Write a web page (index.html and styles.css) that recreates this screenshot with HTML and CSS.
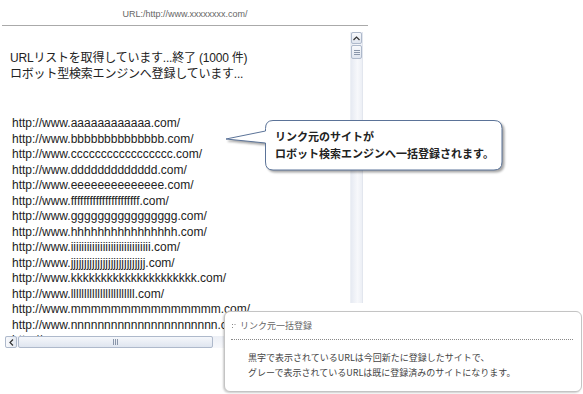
FILE: index.html
```html
<!DOCTYPE html>
<html lang="ja">
<head>
<meta charset="utf-8">
<title>URL一括登録</title>
<link rel="stylesheet" href="styles.css">
</head>
<body>
<div class="page">
    <div class="frame">
        <div class="title">URL:/http://www.xxxxxxxx.com/</div>
        <div class="pane">
            <div class="view">
                <p class="status">URLリストを取得しています...終了 (1000 件)<br>ロボット型検索エンジンへ登録しています...</p>
                <ul class="urls">
                    <li>http://www.aaaaaaaaaaaa.com/</li>
                    <li>http://www.bbbbbbbbbbbbbb.com/</li>
                    <li>http://www.ccccccccccccccccc.com/</li>
                    <li>http://www.ddddddddddddd.com/</li>
                    <li>http://www.eeeeeeeeeeeeee.com/</li>
                    <li>http://www.ffffffffffffffffffffff.com/</li>
                    <li>http://www.gggggggggggggggg.com/</li>
                    <li>http://www.hhhhhhhhhhhhhhhh.com/</li>
                    <li>http://www.iiiiiiiiiiiiiiiiiiiiiiiiiiiiii.com/</li>
                    <li>http://www.jjjjjjjjjjjjjjjjjjjjjjjjjjjj.com/</li>
                    <li>http://www.kkkkkkkkkkkkkkkkkkkkk.com/</li>
                    <li>http://www.llllllllllllllllllllllll.com/</li>
                    <li>http://www.mmmmmmmmmmmmmmm.com/</li>
                    <li>http://www.nnnnnnnnnnnnnnnnnnnnnn.com/</li>
                    <li>http://www.oooooooooooooooooooooo.com/</li>
                </ul>
            </div>
            <div class="vscroll">
                <span class="sbtn">
                    <svg width="7" height="5" viewBox="0 0 7 5"><path d="M0.5 4 L3.5 1 L6.5 4" fill="none" stroke="#333" stroke-width="1.2"/></svg>
                </span>
                <span class="vthumb">
                    <svg width="6" height="5" viewBox="0 0 6 5"><path d="M0 0.5H6M0 2.5H6M0 4.5H6" stroke="#8a96aa" stroke-width="1"/></svg>
                </span>
            </div>
        </div>
        <div class="hscroll">
            <span class="sbtn">
                <svg width="5" height="7" viewBox="0 0 5 7"><path d="M4 0.5 L1 3.5 L4 6.5" fill="none" stroke="#333" stroke-width="1.2"/></svg>
            </span>
            <span class="hthumb">
                <svg width="5" height="6" viewBox="0 0 5 6"><path d="M0.5 0V6M2.5 0V6M4.5 0V6" stroke="#8a96aa" stroke-width="1"/></svg>
            </span>
        </div>
    </div>

    <div class="callout">
        <svg class="bubble" width="290" height="64" viewBox="0 0 290 64">
            <path d="M53 6.5 H274 Q282 6.5 282 14.5 V48 Q282 56 274 56 H53 Q45.5 56 45.5 48 V29 L6 25 L45.5 17 V14.5 Q45.5 6.5 53 6.5 Z" fill="#fff" stroke="#5b7398" stroke-width="1"/>
        </svg>
        <p class="callout-text">リンク元のサイトが<br>ロボット検索エンジンへ一括登録されます。</p>
    </div>

    <div class="note">
        <div class="note-head">
            <svg width="5" height="6" viewBox="0 0 5 6"><path d="M1 1h1v1H1zM1 4h1v1H1zM3.5 1h1v1h-1z" fill="#888"/></svg>
            リンク元一括登録
        </div>
        <p class="note-body">黒字で表示されているURLは今回新たに登録したサイトで、<br>グレーで表示されているURLは既に登録済みのサイトになります。</p>
    </div>
</div>
</body>
</html>
```

FILE: styles.css
```css
body {
	margin: 0;
	background-color: #fff;
	font-family: "Liberation Sans", "Noto Sans CJK JP", sans-serif;
	color: #222;
}
.page {
	position: relative;
	width: 583px;
	height: 394px;
	overflow: hidden;
}

/* left window */
.frame {
	width: 366px;
	margin-left: 2px;
}
.title {
	height: 26px;
	box-sizing: border-box;
	padding-top: 9px;
	border-bottom: 1px solid #aaa;
	text-align: center;
	font-size: 9px;
	line-height: 11px;
	color: #666;
}
.pane {
	display: flex;
	align-items: flex-start;
}
.view {
	width: 348px;
	height: 310px;
	overflow: hidden;
	box-sizing: border-box;
	padding-left: 8px;
}
.status {
	margin: 24px 0 0;
	font-size: 12px;
	line-height: 16px;
	letter-spacing: -0.2px;
	white-space: nowrap;
}
.urls {
	list-style: none;
	margin: 34px 0 0;
	padding: 0 0 0 2px;
	font-size: 12px;
	line-height: 15.5px;
	white-space: nowrap;
}

/* scroll bars */
.vscroll {
	width: 13px;
	height: 271px;
	margin-top: 6px;
	display: flex;
	flex-direction: column;
	box-sizing: border-box;
	background: linear-gradient(to right, #e6eaf2, #f7f8fb 60%, #eceff5);
	border-left: 1px solid #edf0f5;
	border-right: 1px solid #e2e6ee;
}
.sbtn, .vthumb, .hthumb {
	display: flex;
	align-items: center;
	justify-content: center;
	box-sizing: border-box;
	border: 1px solid #aeb9cb;
	border-radius: 2px;
	background: linear-gradient(to bottom, #f8f9fc, #dfe5ef);
}
.vscroll .sbtn {
	height: 12px;
}
.vthumb {
	height: 14px;
	margin-top: 1px;
}
.hscroll {
	display: flex;
	width: 345px;
	height: 12px;
	margin-left: 3px;
	background: linear-gradient(to bottom, #eceff5, #f7f8fb);
}
.hscroll .sbtn {
	width: 12px;
	background: linear-gradient(to right, #f8f9fc, #e4e9f1);
}
.hthumb {
	width: 195px;
	margin-left: 1px;
	background: linear-gradient(to bottom, #f5f7fb, #dfe5ef);
}

/* speech bubble */
.callout {
	position: absolute;
	left: 220px;
	top: 114px;
	width: 290px;
	height: 64px;
}
.bubble {
	display: block;
	filter: drop-shadow(2px 2px 1px rgba(0, 0, 0, 0.35));
}
.callout-text {
	position: absolute;
	left: 55px;
	top: 14px;
	margin: 0;
	font-family: "Noto Sans CJK JP", sans-serif;
	font-size: 11px;
	font-weight: bold;
	line-height: 17px;
	color: #222;
	white-space: nowrap;
}

/* help note */
.note {
	position: absolute;
	left: 224px;
	top: 311px;
	width: 358px;
	height: 81px;
	box-sizing: border-box;
	border: 1px solid #c4c4c4;
	border-radius: 6px;
	background-color: #fff;
	box-shadow: -1px 1px 2px rgba(0, 0, 0, 0.2);
}
.note-head {
	display: flex;
	align-items: center;
	gap: 4px;
	height: 27px;
	margin: 0 8px 0 6px;
	border-bottom: 1px dotted #888;
	font-family: "Noto Sans CJK JP", sans-serif;
	font-size: 9px;
	color: #666;
}
.note-body {
	margin: 10px 0 0 23px;
	font-family: "Noto Sans CJK JP", sans-serif;
	font-size: 9px;
	line-height: 15px;
	color: #444;
	white-space: nowrap;
}
```
